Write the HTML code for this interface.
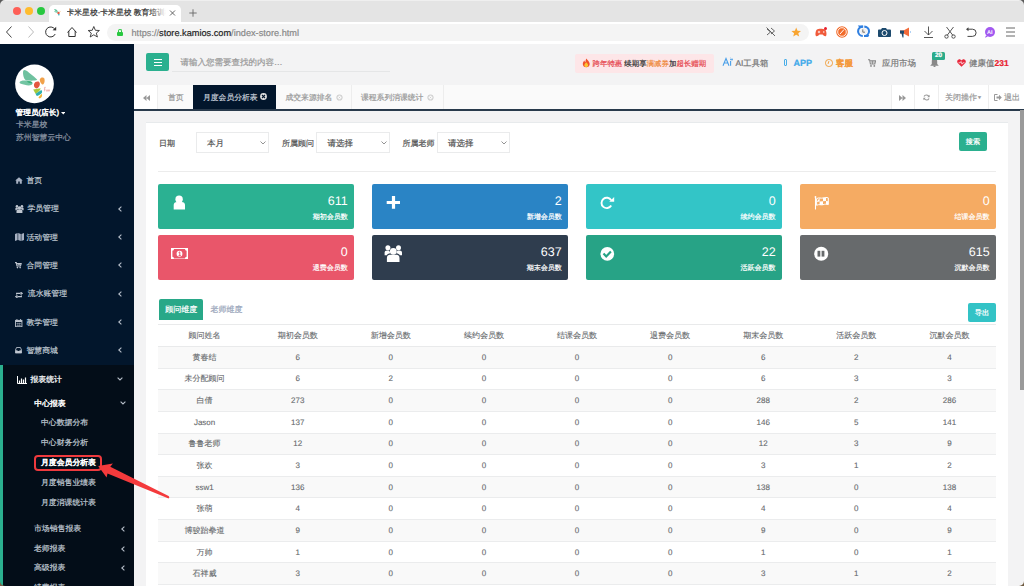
<!DOCTYPE html>
<html><head><meta charset="utf-8">
<style>
*{box-sizing:border-box;margin:0;padding:0}
body *{-webkit-text-stroke:0.2px currentColor}html,body{width:1024px;height:586px;overflow:hidden;background:#f3f3f4;font-family:"Liberation Sans",sans-serif;text-rendering:geometricPrecision}
.a{position:absolute;white-space:nowrap}
/* browser chrome */
#tabbar{position:absolute;left:0;top:0;width:1024px;height:22px;background:#e4e4e4;border-top:1px solid #efefef}
#toolbar{position:absolute;left:0;top:22px;width:1024px;height:22px;background:#fff}
.dot{position:absolute;width:8px;height:8px;border-radius:50%;top:7px}
#ctab{position:absolute;left:49px;top:5px;width:132px;height:17px;background:#fff;border-radius:5px 5px 0 0}
#addr{position:absolute;left:107px;top:24px;width:702px;height:17px;background:#f4f4f4;border-radius:9px}
/* app */
#side{position:absolute;left:0;top:44px;width:134px;height:542px;background:#02162c}
#sub{position:absolute;left:0;top:365px;width:134px;height:221px;background:#030d18;border-left:3px solid #2bb08f}
.mi{position:absolute;color:#bfc6d0;font-size:7.85px;line-height:10px;white-space:nowrap}
#header{position:absolute;left:134px;top:44px;width:890px;height:41px;background:#f3f3f4}
#tabs{position:absolute;left:134px;top:84.8px;width:890px;height:26.2px;background:#fafafa;border-bottom:2px solid #293a4c}
#content{position:absolute;left:134px;top:111px;width:890px;height:475px;background:#f3f3f4}
#panel{position:absolute;left:146px;top:122px;width:862px;height:470px;background:#fff}
.card{position:absolute;width:195.5px;height:45px;border-radius:2px;color:#fff}.card .n{-webkit-text-stroke:0}
.card .n{position:absolute;right:6px;top:9.5px;font-size:12.5px;line-height:14px}
.card .l{position:absolute;right:6px;top:29px;font-size:7px;line-height:9px}
.card svg{position:absolute}
table{position:absolute;left:158px;top:324px;width:838px;border-collapse:collapse;font-size:8px;color:#66696c}table *{-webkit-text-stroke:0.1px currentColor}
td,th{height:21.65px;text-align:center;font-weight:normal;padding:1px 0 0 0;line-height:10px}
th{height:22px}
thead tr{border-top:1px solid #e9eaeb;border-bottom:1px solid #e9eaeb}
tbody tr{border-bottom:1px solid #ebeced}
tbody tr:nth-child(odd){background:#f9f9f9}
</style></head><body>
<!-- browser chrome -->
<div id="tabbar"></div>
<div class="dot" style="left:12.5px;background:#fe5f57"></div>
<div class="dot" style="left:24.5px;background:#febc2e"></div>
<div class="dot" style="left:36.8px;background:#28c840"></div>
<div id="ctab"></div>
<div class="a" style="left:66.5px;top:8px;font-size:7.8px;line-height:10px;color:#333;width:99px;overflow:hidden">卡米星校-卡米星校 教育培训机构</div><div class="a" style="left:150px;top:7px;width:16px;height:12px;background:linear-gradient(to right,rgba(255,255,255,0),#fff)"></div>
<svg class="a" style="left:169px;top:10px" width="7" height="6" viewBox="0 0 7 6"><path d="M1 0.5 L6 5.5 M6 0.5 L1 5.5" stroke="#555" stroke-width="0.9"/></svg>
<svg class="a" style="left:189px;top:8.5px" width="8" height="8" viewBox="0 0 8 8"><path d="M4 0.3 V7.7 M0.3 4 H7.7" stroke="#666" stroke-width="0.9"/></svg>
<div id="toolbar"></div>
<div id="addr"></div>
<div class="a" style="left:131.5px;top:28.3px;font-size:9.2px;line-height:10px;color:#888">https://<span style="color:#222">store.kamios.com</span>/index-store.html</div>
<div id="lock" style="position:absolute;left:117px;top:31.5px;width:6px;height:4.5px;background:#28c840;border-radius:1px"></div>
<div style="position:absolute;left:118px;top:28.5px;width:4px;height:4px;border:1.2px solid #28c840;border-bottom:none;border-radius:2px 2px 0 0"></div>

<!-- toolbar icons -->
<svg class="a" style="left:0;top:21.2px" width="110" height="22" viewBox="0 0 110 22">
<path d="M11.5 5.5 L6.5 11 L11.5 16.5" stroke="#444" stroke-width="1" fill="none"/>
<path d="M28.5 5.5 L33.5 11 L28.5 16.5" stroke="#bbb" stroke-width="1" fill="none"/>
<path d="M54.8 8.2 A5 5 0 1 0 55.2 13" stroke="#333" stroke-width="1" fill="none"/>
<path d="M56.2 5.8 L56.2 9.6 L52.6 9.2Z" fill="#333"/>
<path d="M67.5 11.5 L72 6.5 L76.5 11.5 M68.8 10 V15.5 H75.2 V10" stroke="#333" stroke-width="1" fill="none" stroke-linejoin="round"/>
<path d="M93.8 5.5 L95.4 9.3 L99.4 9.5 L96.3 12.1 L97.4 16 L93.8 13.8 L90.2 16 L91.3 12.1 L88.2 9.5 L92.2 9.3Z" stroke="#333" stroke-width="0.9" fill="none" stroke-linejoin="round"/>
</svg>
<svg class="a" style="left:760px;top:21.3px" width="264" height="22" viewBox="0 0 264 22">
<path d="M7 8 L10.5 11 L7 14 M11 7 L14.5 10 L11 13" stroke="#555" stroke-width="0.9" fill="none"/><path d="M6.5 6.5 L15 15" stroke="#555" stroke-width="0.9"/>
<path d="M36.2 6.5 L37.5 9.8 L41 10 L38.3 12.2 L39.2 15.6 L36.2 13.7 L33.2 15.6 L34.1 12.2 L31.4 10 L34.9 9.8Z" fill="#f8a532"/>
<path d="M57 8.5 C58 7.5 63 7.5 65 8.5 C66.5 9.5 67 14 66 15 C65 15.8 63.5 14.5 62.5 13.5 H59.5 C58.5 14.5 57 15.8 56 15 C55 14 55.5 9.5 57 8.5Z" fill="#f05a3a"/><path d="M57.8 11 H60.2 M59 9.8 V12.2" stroke="#fff" stroke-width="0.8"/><circle cx="63.8" cy="11" r="0.7" fill="#fff"/><circle cx="65.5" cy="7.5" r="1.5" fill="#e8202e"/>
<circle cx="82" cy="11" r="5.8" fill="#f26b2a"/><circle cx="82" cy="11" r="4.3" fill="none" stroke="#fff" stroke-width="0.9"/><path d="M80 13 L84 8.5" stroke="#fff" stroke-width="1"/>
<path d="M102.8 5.6 A4.7 4.7 0 0 0 102.8 15" stroke="#2f7fe0" stroke-width="2.1" fill="none"/><path d="M97.8 4.5 H103.2 V6.7 H99.6Z" fill="#2f7fe0"/><path d="M104.3 5.6 A4.7 4.7 0 0 1 104.3 15" stroke="#2f7fe0" stroke-width="2.1" fill="none"/><path d="M104 13.9 H109.3 L108.2 15.9 H104Z" fill="#2f7fe0"/><circle cx="103.6" cy="10.3" r="3.3" fill="#f0f0f0"/><path d="M102.8 8.4 V11.2 H105" stroke="#555" stroke-width="0.8" fill="none"/>
<path d="M118.5 8.5 H121 L122 7 H126 L127 8.5 H130 C130.5 8.5 131 9 131 9.5 V15 C131 15.5 130.5 16 130 16 H119 C118.5 16 118 15.5 118 15 V9.5 C118 9 118.5 8.5 119 8.5Z" fill="#1d4a6e"/><circle cx="124.5" cy="12" r="2.5" fill="none" stroke="#fff" stroke-width="1"/>
<path d="M140 9.5 H143.5 L149 6.5 V15.5 L143.5 12.5 H140Z" fill="#f26b3a"/><path d="M140 9.5 H144 V12.5 H140Z M141.5 12.5 L142.5 16.5 H143.5 L143.5 12.5Z" fill="#1d4a6e"/><path d="M150.5 10.5 V11.5" stroke="#3a8ee6" stroke-width="0.8"/>
<path d="M168.5 5.5 V14 M164.5 10 L168.5 14 L172.5 10" stroke="#444" stroke-width="0.9" fill="none"/><path d="M164 16.5 H173" stroke="#444" stroke-width="0.9"/>
<path d="M186.5 6 L193 14.5 M193.5 6 L187 14.5" stroke="#444" stroke-width="0.9"/><circle cx="186.5" cy="15.5" r="1.7" fill="none" stroke="#444" stroke-width="0.9"/><circle cx="193.5" cy="15.5" r="1.7" fill="none" stroke="#444" stroke-width="0.9"/>
<path d="M207 8.2 H212.5 A3.6 3.6 0 0 1 212.5 15.4 H207.5" stroke="#444" stroke-width="1" fill="none"/><path d="M206 8.2 L208.5 6.2 V10.2Z" fill="#444"/>
<circle cx="230" cy="11" r="5" fill="#a259f0"/><path d="M226 14.5 L225 16.8 L228 15.6Z" fill="#a259f0"/><text x="227" y="13.3" font-size="5.5" font-weight="bold" fill="#fff" font-family="Liberation Sans">AI</text>
<path d="M246 7 H255 M246 11 H255 M246 15 H255" stroke="#555" stroke-width="0.9"/>
</svg>
<!-- favicon -->
<svg class="a" style="left:54px;top:8px" width="8" height="9" viewBox="0 0 8 9"><path d="M0 1 C2 1 3.5 2 4 4 C2.5 4 1 3 0 1Z" fill="#5cbf98"/><path d="M0 3.5 C1.5 3 3 3.5 4 4.5 C2.5 5 1 4.5 0 3.5Z" fill="#6cc6a2"/><circle cx="4.5" cy="5" r="1.2" fill="#e9573f"/><path d="M5.8 2.5 L6.5 3.5 L5.8 4.5Z" fill="#f2a650"/><path d="M3.8 6.2 L5.8 5.8 L5 8 Z" fill="#3bb3c3"/></svg>

<!-- sidebar -->
<div id="side"></div>
<div id="sub"></div>
<svg style="position:absolute;left:14px;top:63px" width="42" height="42" viewBox="0 0 586 586">
<circle cx="286" cy="290" r="270" fill="#fff"/>
<path d="M128 110 C140 85 175 105 210 135 C260 175 300 205 325 235 C290 250 220 250 165 240 C135 220 120 150 128 110Z" fill="#6fc19f"/>
<path d="M78 270 C85 240 150 240 215 250 C245 255 262 265 258 290 C250 315 200 318 150 305 C110 295 75 290 78 270Z" fill="#73c5a3"/>
<path d="M185 252 C215 255 245 262 258 278 C245 285 215 280 190 268Z" fill="#3aae78"/>
<path d="M278 305 C280 270 318 252 348 262 C370 280 365 325 332 350 C302 365 275 340 278 305Z" fill="#e4573f"/>
<path d="M362 225 C370 200 410 195 425 220 C432 250 425 290 405 300 C385 300 355 260 362 225Z" fill="#f1a14a"/>
<path d="M268 368 L372 352 C365 385 335 410 300 428 Z" fill="#a9c93c"/>
<path d="M300 430 C330 410 360 390 382 375 C398 392 395 415 378 428 C358 442 335 455 318 462 Z" fill="#2eb0ae"/>
<path d="M340 480 C355 462 372 442 388 428 C398 452 390 482 358 496 Z" fill="#f1b234"/>
<path d="M425 340 V395 M425 340 H445 M425 365 H440 M450 370 V392 M450 392 H470 V370 M480 370 V392 H495 V370" stroke="#e07070" stroke-width="6" fill="none"/>
</svg>
<div class="mi" style="left:15.5px;top:108.3px;color:#fff;-webkit-text-stroke:0.45px #fff;font-size:7.7px">管理员(店长)</div><svg class="a" style="left:60.5px;top:111.8px" width="4.5" height="3" viewBox="0 0 4.5 3"><path d="M0 0 H4.5 L2.25 2.5Z" fill="#fff"/></svg>
<div class="mi" style="left:16px;top:119.5px;color:#8b95a3">卡米星校</div>
<div class="mi" style="left:16px;top:133px;color:#8b95a3">苏州智慧云中心</div>

<div class="mi" style="left:26.5px;top:176.1px">首页</div>
<div class="mi" style="left:27.4px;top:204.4px">学员管理</div>
<div class="mi" style="left:26.5px;top:232.7px">活动管理</div>
<div class="mi" style="left:26.5px;top:261.0px">合同管理</div>
<div class="mi" style="left:27.8px;top:289.3px">流水账管理</div>
<div class="mi" style="left:26.5px;top:317.6px">教学管理</div>
<div class="mi" style="left:26.5px;top:345.9px">智慧商城</div>
<div class="mi" style="left:30.5px;top:375px;color:#eef0f3;-webkit-text-stroke:0.3px #eef0f3">报表统计</div>
<div class="mi" style="left:34.3px;top:399px;color:#fff;-webkit-text-stroke:0.4px #fff">中心报表</div>
<div class="mi" style="left:41px;top:418.1px">中心数据分布</div>
<div class="mi" style="left:41px;top:438.2px">中心财务分析</div>
<div class="mi" style="left:41px;top:458.3px;color:#fff;-webkit-text-stroke:0.5px #fff">月度会员分析表</div>
<div class="mi" style="left:41px;top:477.8px">月度销售业绩表</div>
<div class="mi" style="left:41px;top:497.6px">月度消课统计表</div>
<div class="mi" style="left:34px;top:523.7px">市场销售报表</div>
<div class="mi" style="left:34px;top:543.7px">老师报表</div>
<div class="mi" style="left:34px;top:563.1px">高级报表</div>
<div class="mi" style="left:34px;top:583px">续费报表</div>

<!-- sidebar icons -->
<svg class="a" style="left:15px;top:176.5px" width="8" height="7" viewBox="0 0 8 7"><path d="M4 0.3 L7.8 3.6 L6.8 3.6 L6.8 6.8 L4.8 6.8 L4.8 4.6 L3.2 4.6 L3.2 6.8 L1.2 6.8 L1.2 3.6 L0.2 3.6Z" fill="#a7b1c2"/></svg>
<svg class="a" style="left:15px;top:204.8px" width="9" height="8" viewBox="12.4 10 17.8 17"><circle cx="21.3" cy="16.3" r="3.6" fill="#bfc6d0"/><circle cx="15.9" cy="12.9" r="2.7" fill="#bfc6d0"/><circle cx="26.5" cy="12.9" r="2.7" fill="#bfc6d0"/><path d="M14.9 27 V23 C14.9 21 16.2 19.8 18.2 19.8 H24.2 C26.2 19.8 27.5 21 27.5 23 V27Z" fill="#bfc6d0"/><path d="M12.6 21 V17.6 C12.6 16.3 13.6 15.5 15 15.5 H17.2 C17.5 16.5 17.9 17.3 18.5 18.3 C16.4 18.6 15.2 19.3 14.8 21Z M30 21 V17.6 C30 16.3 29 15.5 27.6 15.5 H25.4 C25.1 16.5 24.7 17.3 24.1 18.3 C26.2 18.6 27.4 19.3 27.8 21Z" fill="#bfc6d0"/></svg>
<svg class="a" style="left:15px;top:232.5px" width="9" height="8" viewBox="0 0 9 8"><path d="M0 1 L2.6 0 L2.6 7 L0 8Z M3.2 0 L5.8 1 L5.8 8 L3.2 7Z M6.4 1 L9 0 L9 7 L6.4 8Z" fill="#a7b1c2"/></svg>
<svg class="a" style="left:15.2px;top:262px" width="6.5" height="6.5" viewBox="0 0 8 8"><path d="M0 0.8 L1.6 0.8 L2.4 5 L6.8 5 L7.6 1.8 L2 1.8" stroke="#bfc6d0" stroke-width="1.3" fill="none"/><circle cx="3" cy="6.9" r="1" fill="#bfc6d0"/><circle cx="6.3" cy="6.9" r="1" fill="#bfc6d0"/><path d="M3 3.3 L6.8 3.3" stroke="#bfc6d0" stroke-width="1.2"/></svg>
<svg class="a" style="left:15.3px;top:291.5px" width="8" height="6" viewBox="0 0 10 7"><path d="M2 3 L2 1.5 L7 1.5 M7 0 L9 1.5 L7 3 M8 4 L8 5.5 L3 5.5 M3 4 L1 5.5 L3 7" stroke="#bfc6d0" stroke-width="1.4" fill="none"/></svg>
<svg class="a" style="left:15.3px;top:318.5px" width="7.5" height="8.2" viewBox="0 0 8 9"><rect x="0.5" y="1.5" width="7" height="7" fill="none" stroke="#bfc6d0" stroke-width="1"/><rect x="0.5" y="1.5" width="7" height="1.8" fill="#bfc6d0"/><path d="M2 0 L2 2 M6 0 L6 2" stroke="#bfc6d0" stroke-width="1"/><path d="M1.5 5 H6.5 M1.5 7 H6.5 M3 4 V8 M5 4 V8" stroke="#bfc6d0" stroke-width="0.5"/></svg>
<svg class="a" style="left:15.3px;top:347.2px" width="7" height="6.5" viewBox="0 0 9 8"><path d="M0.5 4 L2 0.5 L7 0.5 L8.5 4 L8.5 7.5 L0.5 7.5Z" fill="none" stroke="#bfc6d0" stroke-width="1.1"/><path d="M0.5 4 L3 4 L3.5 5 L5.5 5 L6 4 L8.5 4 L8.5 7.5 L0.5 7.5Z" fill="#bfc6d0"/></svg>
<svg class="a" style="left:17px;top:375.5px" width="10" height="8" viewBox="0 0 10 8"><path d="M0.5 0 V7.5 H10" stroke="#fff" stroke-width="1" fill="none"/><path d="M2.5 4.5 V7 M4.5 2.5 V7 M6.5 3.5 V7 M8.5 1.5 V7" stroke="#fff" stroke-width="1.2"/></svg>
<!-- chevrons -->
<svg class="a" style="left:118.3px;top:205.8px" width="4" height="6" viewBox="0 0 4 6"><path d="M3.4 0.6 L0.8 3 L3.4 5.4" stroke="#b5bdc8" stroke-width="1.1" fill="none"/></svg>
<svg class="a" style="left:118.3px;top:234.1px" width="4" height="6" viewBox="0 0 4 6"><path d="M3.4 0.6 L0.8 3 L3.4 5.4" stroke="#b5bdc8" stroke-width="1.1" fill="none"/></svg>
<svg class="a" style="left:118.3px;top:262.4px" width="4" height="6" viewBox="0 0 4 6"><path d="M3.4 0.6 L0.8 3 L3.4 5.4" stroke="#b5bdc8" stroke-width="1.1" fill="none"/></svg>
<svg class="a" style="left:118.3px;top:290.7px" width="4" height="6" viewBox="0 0 4 6"><path d="M3.4 0.6 L0.8 3 L3.4 5.4" stroke="#b5bdc8" stroke-width="1.1" fill="none"/></svg>
<svg class="a" style="left:118.3px;top:319.0px" width="4" height="6" viewBox="0 0 4 6"><path d="M3.4 0.6 L0.8 3 L3.4 5.4" stroke="#b5bdc8" stroke-width="1.1" fill="none"/></svg>
<svg class="a" style="left:118.3px;top:347.3px" width="4" height="6" viewBox="0 0 4 6"><path d="M3.4 0.6 L0.8 3 L3.4 5.4" stroke="#b5bdc8" stroke-width="1.1" fill="none"/></svg>
<svg class="a" style="left:116.8px;top:376.8px" width="6" height="4" viewBox="0 0 6 4"><path d="M0.6 0.6 L3 3 L5.4 0.6" stroke="#b5bdc8" stroke-width="1.1" fill="none"/></svg>
<svg class="a" style="left:119.6px;top:400.6px" width="6" height="4" viewBox="0 0 6 4"><path d="M0.6 0.6 L3 3 L5.4 0.6" stroke="#b5bdc8" stroke-width="1.1" fill="none"/></svg>
<svg class="a" style="left:121.3px;top:525.8px" width="4" height="6" viewBox="0 0 4 6"><path d="M3.4 0.6 L0.8 3 L3.4 5.4" stroke="#b5bdc8" stroke-width="1.1" fill="none"/></svg>
<svg class="a" style="left:121.3px;top:545.8px" width="4" height="6" viewBox="0 0 4 6"><path d="M3.4 0.6 L0.8 3 L3.4 5.4" stroke="#b5bdc8" stroke-width="1.1" fill="none"/></svg>
<svg class="a" style="left:121.3px;top:565.3px" width="4" height="6" viewBox="0 0 4 6"><path d="M3.4 0.6 L0.8 3 L3.4 5.4" stroke="#b5bdc8" stroke-width="1.1" fill="none"/></svg>
<!-- red highlight -->
<div class="a" style="left:34.2px;top:454.8px;width:68.2px;height:16.4px;border:2px solid #ef3a3e;border-radius:4px"></div>

<!-- header -->
<div id="header"></div>
<div style="position:absolute;left:146px;top:53px;width:23px;height:18px;background:#2bb08f;border-radius:2px"></div>
<div style="position:absolute;left:154px;top:58.5px;width:8px;height:1.5px;background:#fff;box-shadow:0 3px 0 #fff,0 6px 0 #fff"></div>
<div class="a" style="left:180.5px;top:57.3px;font-size:8.5px;line-height:10px;color:#999">请输入您需要查找的内容…</div>
<div style="position:absolute;left:172px;top:70.5px;width:218px;height:1px;background:#e5e6e7"></div>

<!-- header right -->
<div class="a" style="left:575px;top:54px;width:139px;height:18.6px;background:#fde6e8;border-radius:2px"></div>
<svg class="a" style="left:581.5px;top:58.3px" width="8.5" height="9.5" viewBox="0 0 9 11"><path d="M4.5 0.5 C6 2.5 8.5 4 8.5 7 C8.5 9.3 6.8 10.8 4.5 10.8 C2.2 10.8 0.5 9.3 0.5 7 C0.5 5 1.8 3.8 2.5 3 C2.6 4.2 3 4.8 3.6 5 C3.6 3.2 4 2 4.5 0.5Z" fill="#f0522a"/><path d="M4.5 5 C5.5 6.3 6.7 7 6.7 8.5 C6.7 9.7 5.7 10.6 4.5 10.6 C3.3 10.6 2.3 9.7 2.3 8.5 C2.3 7.3 3.6 6.3 4.5 5Z" fill="#fbc531"/></svg>
<div class="a" style="left:592.5px;top:59px;font-size:7.45px;line-height:10px;color:#e64a52">跨年特惠 <span style="color:#333">续期享</span><span style="color:#ef8a3c">满减券</span><span style="color:#333">加</span>超长赠期</div>
<svg class="a" style="left:722px;top:57px" width="12" height="10" viewBox="0 0 12 10"><path d="M1 8.8 L4 1.5 L7 8.8 M2.2 6 H5.8 M8.6 4 V8.8" stroke="#4a9fe8" stroke-width="1.1" fill="none"/><circle cx="8.6" cy="2.6" r="0.6" fill="#4a9fe8"/><circle cx="10" cy="2.5" r="0.9" fill="#4a9fe8"/><circle cx="8.3" cy="1" r="0.45" fill="#4a9fe8"/></svg>
<div class="a" style="left:735.5px;top:58.3px;font-size:8.3px;line-height:10px;color:#727272">AI工具箱</div>
<div class="a" style="left:783.5px;top:59px;width:3.5px;height:6.5px;border:1px solid #4aaee8;border-radius:1px"></div>
<div class="a" style="left:793.5px;top:57.5px;font-size:9px;line-height:11px;color:#41a9ea;font-weight:bold">APP</div>
<div class="a" style="left:825px;top:59px;width:7.5px;height:7.5px;border:1.1px solid #f0a040;border-radius:50%"></div>
<div class="a" style="left:828.3px;top:60.5px;width:1px;height:2.8px;background:#f0a040;transform:rotate(20deg)"></div>
<div class="a" style="left:836px;top:58px;font-size:8.5px;line-height:10px;color:#f39a3d;font-weight:bold">客服</div>
<svg class="a" style="left:867.5px;top:59px" width="8" height="8" viewBox="0 0 8 8"><path d="M0 0.8 L1.6 0.8 L2.4 5 L6.8 5 L7.6 1.8 L2 1.8" stroke="#888" stroke-width="1.1" fill="none"/><circle cx="3" cy="6.9" r="0.9" fill="#888"/><circle cx="6.3" cy="6.9" r="0.9" fill="#888"/><path d="M3 3 L6.8 3 M4.5 1.8 V5" stroke="#888" stroke-width="0.8"/></svg>
<div class="a" style="left:882px;top:58px;font-size:8.5px;line-height:10px;color:#777">应用市场</div>
<svg class="a" style="left:930px;top:57px" width="9" height="10" viewBox="0 0 9 10"><path d="M4.5 0.5 C6.5 0.5 7.2 2.5 7.2 4.5 L7.2 7 L8.8 8.8 L0.2 8.8 L1.8 7 L1.8 4.5 C1.8 2.5 2.5 0.5 4.5 0.5Z" fill="#888"/><circle cx="4.5" cy="9.3" r="1" fill="#888"/></svg>
<div class="a" style="left:932px;top:52px;width:13px;height:8px;background:#2bab8a;border-radius:1.5px;color:#fff;font-size:6.5px;line-height:8px;text-align:center;font-weight:bold">20</div>
<svg class="a" style="left:957px;top:58.5px" width="9" height="8" viewBox="0 0 9 8"><path d="M4.5 7.8 L0.9 4.2 C-0.3 3 0 0.8 1.8 0.4 C3 0.1 3.9 0.8 4.5 1.6 C5.1 0.8 6 0.1 7.2 0.4 C9 0.8 9.3 3 8.1 4.2Z" fill="#e8283c"/><path d="M1.5 3.8 L3.2 3.8 L4 2.5 L5 5.2 L5.8 3.8 L7.5 3.8" stroke="#fff" stroke-width="0.7" fill="none"/></svg>
<div class="a" style="left:969px;top:58px;font-size:8.5px;line-height:10px;color:#777">健康值<span style="color:#e8202e;font-weight:bold">231</span></div>

<!-- tabs -->
<div id="tabs"></div>
<div class="a" style="left:134px;top:84.8px;width:24px;height:24.2px;background:#fff;border-right:1px solid #eee"></div>
<svg class="a" style="left:143px;top:94.5px" width="7" height="6" viewBox="0 0 7 6"><path d="M3.5 0 L0 3 L3.5 6Z M7 0 L3.5 3 L7 6Z" fill="#999"/></svg>
<div class="a" style="left:168px;top:92.6px;font-size:7.8px;line-height:10px;color:#999">首页</div>
<div class="a" style="left:193px;top:84.8px;width:83px;height:24.2px;background:#02162c"></div>
<div class="a" style="left:203px;top:92.6px;font-size:7.8px;line-height:10px;color:#c3cbd6">月度会员分析表</div>
<svg class="a" style="left:260px;top:93.4px" width="7" height="7" viewBox="0 0 7 7"><circle cx="3.5" cy="3.5" r="3.4" fill="#e2e2e2"/><path d="M2 2 L5 5 M5 2 L2 5" stroke="#02162c" stroke-width="1.1"/></svg>
<div class="a" style="left:276px;top:84.8px;width:76px;height:24.2px;border-right:1px solid #ededed"></div>
<div class="a" style="left:285.5px;top:92.6px;font-size:7.8px;line-height:10px;color:#999">成交来源排名</div>
<svg class="a" style="left:335.8px;top:93.8px" width="7" height="7" viewBox="0 0 7 7"><circle cx="3.5" cy="3.5" r="3.1" fill="#cfcfcf"/><circle cx="3.5" cy="3.5" r="2" fill="#fafafa"/><path d="M2.6 2.6 L4.4 4.4 M4.4 2.6 L2.6 4.4" stroke="#cfcfcf" stroke-width="0.8"/></svg>
<div class="a" style="left:352px;top:84.8px;width:92px;height:24.2px;border-right:1px solid #ededed"></div>
<div class="a" style="left:361px;top:92.6px;font-size:7.8px;line-height:10px;color:#999">课程系列消课统计</div>
<svg class="a" style="left:426.8px;top:93.8px" width="7" height="7" viewBox="0 0 7 7"><circle cx="3.5" cy="3.5" r="3.1" fill="#cfcfcf"/><circle cx="3.5" cy="3.5" r="2" fill="#fafafa"/><path d="M2.6 2.6 L4.4 4.4 M4.4 2.6 L2.6 4.4" stroke="#cfcfcf" stroke-width="0.8"/></svg>
<div class="a" style="left:890.5px;top:84.8px;width:134px;height:24.2px;background:#fff"></div>
<div class="a" style="left:890.5px;top:84.8px;width:1px;height:24.2px;background:#eee"></div>
<div class="a" style="left:914px;top:84.8px;width:1px;height:24.2px;background:#eee"></div>
<div class="a" style="left:938px;top:84.8px;width:1px;height:24.2px;background:#eee"></div>
<div class="a" style="left:987.5px;top:84.8px;width:1px;height:24.2px;background:#eee"></div>
<svg class="a" style="left:899px;top:94.5px" width="7" height="6" viewBox="0 0 7 6"><path d="M0 0 L3.5 3 L0 6Z M3.5 0 L7 3 L3.5 6Z" fill="#999"/></svg>
<svg class="a" style="left:922.5px;top:93.5px" width="7" height="7" viewBox="0 0 7 7"><path d="M6 2.8 A2.7 2.7 0 0 0 1 2.5 M1 4.2 A2.7 2.7 0 0 0 6 4.5" stroke="#999" stroke-width="1.1" fill="none"/><path d="M6.6 0.8 L6.6 3.2 L4.3 3.2Z M0.4 6.2 L0.4 3.8 L2.7 3.8Z" fill="#999"/></svg>
<div class="a" style="left:945px;top:92.5px;font-size:8px;line-height:10px;color:#999">关闭操作<span style="font-size:5px;position:relative;top:-1px">▼</span></div>
<svg class="a" style="left:994px;top:94px" width="8" height="7" viewBox="0 0 8 7"><path d="M3.5 0.5 H0.5 V6.5 H3.5" stroke="#999" stroke-width="1" fill="none"/><path d="M2.5 2.5 H5 V0.8 L7.8 3.5 L5 6.2 V4.5 H2.5Z" fill="#999"/></svg>
<div class="a" style="left:1004px;top:92.5px;font-size:8px;line-height:10px;color:#999">退出</div>

<!-- content -->
<div id="content"></div>
<div id="panel"></div>
<div style="position:absolute;left:146px;top:122px;width:862px;height:1px;background:#e7eaec"></div>
<div class="a" style="left:159px;top:139px;font-size:8px;line-height:10px;color:#555">日期</div>
<div class="a" style="left:196px;top:132px;width:73px;height:21px;border:1px solid #eaebec;font-size:8.5px;line-height:20.5px;color:#555;padding-left:10px">本月<svg width="6" height="4" viewBox="0 0 6 4" style="position:absolute;right:1.8px;top:8px"><path d="M0.5 0.5 L3 3 L5.5 0.5" stroke="#777" stroke-width="0.8" fill="none"/></svg></div>
<div class="a" style="left:282px;top:139px;font-size:8px;line-height:10px;color:#555">所属顾问</div>
<div class="a" style="left:316px;top:132px;width:73.5px;height:21px;border:1px solid #eaebec;font-size:8.5px;line-height:20.5px;color:#555;padding-left:10.5px">请选择<svg width="6" height="4" viewBox="0 0 6 4" style="position:absolute;right:1.8px;top:8px"><path d="M0.5 0.5 L3 3 L5.5 0.5" stroke="#777" stroke-width="0.8" fill="none"/></svg></div>
<div class="a" style="left:402.5px;top:139px;font-size:8px;line-height:10px;color:#555">所属老师</div>
<div class="a" style="left:436.5px;top:132px;width:73.5px;height:21px;border:1px solid #eaebec;font-size:8.5px;line-height:20.5px;color:#555;padding-left:10.5px">请选择<svg width="6" height="4" viewBox="0 0 6 4" style="position:absolute;right:1.8px;top:8px"><path d="M0.5 0.5 L3 3 L5.5 0.5" stroke="#777" stroke-width="0.8" fill="none"/></svg></div>
<div class="a" style="left:959px;top:132px;width:28px;height:19px;background:#2bb08f;border-radius:2px;color:#fff;font-size:7.2px;line-height:20.5px;text-align:center">搜索</div>
<div style="position:absolute;left:158px;top:171px;width:838px;height:1px;background:#ececec"></div>

<div class="card" style="left:158.3px;top:184px;background:#2bb192"><svg style="left:0;top:0" width="40" height="45" viewBox="0 0 40 45"><circle cx="21.1" cy="15.3" r="3.7" fill="#fff"/><path d="M15.7 25.5 V21 C15.7 19.2 17 18.1 19 18.1 H23.7 C25.7 18.1 27 19.2 27 21 V25.5Z" fill="#fff"/></svg><div class="n">611</div><div class="l">期初会员数</div></div>
<div class="card" style="left:372.2px;top:184px;background:#2a84c5"><svg style="left:0;top:0" width="40" height="45" viewBox="0 0 40 45"><path d="M19.9 11.9 H23.1 V16.9 H28 V20.1 H23.1 V24.7 H19.9 V20.1 H14.7 V16.9 H19.9Z" fill="#fff"/></svg><div class="n">2</div><div class="l">新增会员数</div></div>
<div class="card" style="left:586.1px;top:184px;background:#33c5c7"><svg style="left:0;top:0" width="40" height="45" viewBox="0 0 40 45"><path d="M25.2 16.3 A5.2 5.2 0 1 0 25.2 21.5" stroke="#fff" stroke-width="1.9" fill="none"/><path d="M23.2 17.7 H28.2 V12.9Z" fill="#fff"/></svg><div class="n">0</div><div class="l">续约会员数</div></div>
<div class="card" style="left:800.1px;top:184px;background:#f5ab63"><svg style="left:0;top:0" width="40" height="45" viewBox="0 0 40 45"><path d="M15.5 13 V25.5" stroke="#fff" stroke-width="1.1"/><circle cx="15.5" cy="12.9" r="0.9" fill="#fff"/><path d="M16.6 14.6 C19 13.2 21 14.6 23 14 C25 13.4 26.6 13.2 28.3 13.9 V20.6 C26.6 19.9 25 20.1 23 20.7 C21 21.3 19 19.9 16.6 21.3Z" fill="none" stroke="#fff" stroke-width="1"/><path d="M19.6 13.9 L19.6 17.4 L16.6 18 Z M19.6 17.4 L23 17.2 L23 20.7 L19.6 20.9Z M23 14 L26 13.4 L26 17 L23 17.2Z M26 17 L28.3 17.2 L28.3 20.6 L26 20.2Z" fill="#fff"/></svg><div class="n">0</div><div class="l">结课会员数</div></div>

<div class="card" style="left:158.3px;top:235px;background:#e9566a"><svg style="left:12.7px;top:12.9px" width="17" height="11.5" viewBox="0 0 17 11.5"><rect x="0" y="0" width="17" height="11.5" fill="#fff"/><path d="M3 1.1 H14 A1.6 1.6 0 0 0 15.6 2.7 V8.8 A1.6 1.6 0 0 0 14 10.4 H3 A1.6 1.6 0 0 0 1.4 8.8 V2.7 A1.6 1.6 0 0 0 3 1.1Z" fill="#e9566a"/><circle cx="8.5" cy="5.75" r="2.9" fill="#fff"/><path d="M7.6 4.6 L8.8 3.9 V7.6 M7.6 7.6 H9.8" stroke="#e9566a" stroke-width="1" fill="none"/></svg><div class="n">0</div><div class="l">退费会员数</div></div>
<div class="card" style="left:372.2px;top:235px;background:#2f3d4e"><svg style="left:0;top:0" width="40" height="45" viewBox="0 0 40 45"><circle cx="21.3" cy="16.3" r="3.4" fill="#fff"/><circle cx="15.9" cy="12.7" r="2.5" fill="#fff"/><circle cx="26.5" cy="12.7" r="2.5" fill="#fff"/><path d="M14.9 27 V23 C14.9 21 16.2 19.8 18.2 19.8 H24.2 C26.2 19.8 27.5 21 27.5 23 V27Z" fill="#fff"/><path d="M12.6 20.3 V17.6 C12.6 16.3 13.6 15.5 15 15.5 H17.2 C17.5 16.5 17.9 17.3 18.5 18.3 C16.4 18.6 15.2 19.3 14.8 20.3Z M30 20.3 V17.6 C30 16.3 29 15.5 27.6 15.5 H25.4 C25.1 16.5 24.7 17.3 24.1 18.3 C26.2 18.6 27.4 19.3 27.8 20.3Z" fill="#fff"/></svg><div class="n">637</div><div class="l">期末会员数</div></div>
<div class="card" style="left:586.1px;top:235px;background:#27a386"><svg style="left:0;top:0" width="40" height="45" viewBox="0 0 40 45"><circle cx="21.3" cy="18.8" r="6.85" fill="#fff"/><path d="M17.5 18.6 L20.2 21.4 L24.9 16.6" stroke="#27a386" stroke-width="2.2" fill="none"/></svg><div class="n">22</div><div class="l">活跃会员数</div></div>
<div class="card" style="left:800.1px;top:235px;background:#676a6c"><svg style="left:0;top:0" width="40" height="45" viewBox="0 0 40 45"><circle cx="21.2" cy="18.8" r="7" fill="#fff"/><rect x="17.5" y="15.8" width="2.8" height="5.8" fill="#676a6c"/><rect x="21.6" y="15.8" width="2.8" height="5.8" fill="#676a6c"/></svg><div class="n">615</div><div class="l">沉默会员数</div></div>

<div class="a" style="left:159px;top:299px;width:44px;height:21px;background:#28a888;border-radius:2px 2px 0 0;color:#fff;font-size:8px;line-height:21px;text-align:center;padding-left:0.5px">顾问维度</div>
<div class="a" style="left:210.5px;top:304.8px;font-size:8px;line-height:10px;color:#9aa6bb">老师维度</div>
<div class="a" style="left:968px;top:303px;width:28px;height:19px;background:#33c3c6;border-radius:2px;color:#fff;font-size:7.2px;line-height:20px;text-align:center">导出</div>
<table>
<thead><tr><th>顾问姓名</th><th>期初会员数</th><th>新增会员数</th><th>续约会员数</th><th>结课会员数</th><th>退费会员数</th><th>期末会员数</th><th>活跃会员数</th><th>沉默会员数</th></tr></thead>
<tbody>
<tr><td>黄春结</td><td>6</td><td>0</td><td>0</td><td>0</td><td>0</td><td>6</td><td>2</td><td>4</td></tr>
<tr><td>未分配顾问</td><td>6</td><td>2</td><td>0</td><td>0</td><td>0</td><td>6</td><td>3</td><td>3</td></tr>
<tr><td>白倩</td><td>273</td><td>0</td><td>0</td><td>0</td><td>0</td><td>288</td><td>2</td><td>286</td></tr>
<tr><td>Jason</td><td>137</td><td>0</td><td>0</td><td>0</td><td>0</td><td>146</td><td>5</td><td>141</td></tr>
<tr><td>鲁鲁老师</td><td>12</td><td>0</td><td>0</td><td>0</td><td>0</td><td>12</td><td>3</td><td>9</td></tr>
<tr><td>张欢</td><td>3</td><td>0</td><td>0</td><td>0</td><td>0</td><td>3</td><td>1</td><td>2</td></tr>
<tr><td>ssw1</td><td>136</td><td>0</td><td>0</td><td>0</td><td>0</td><td>138</td><td>0</td><td>138</td></tr>
<tr><td>张萌</td><td>4</td><td>0</td><td>0</td><td>0</td><td>0</td><td>4</td><td>0</td><td>4</td></tr>
<tr><td>博骏跆拳道</td><td>9</td><td>0</td><td>0</td><td>0</td><td>0</td><td>9</td><td>0</td><td>9</td></tr>
<tr><td>万帅</td><td>1</td><td>0</td><td>0</td><td>0</td><td>0</td><td>1</td><td>0</td><td>1</td></tr>
<tr><td>石祥威</td><td>3</td><td>0</td><td>0</td><td>0</td><td>0</td><td>3</td><td>1</td><td>2</td></tr>
<tr><td>王老师</td><td>0</td><td>0</td><td>0</td><td>0</td><td>0</td><td>0</td><td>0</td><td>0</td></tr>

</tbody></table>

<!-- scrollbar -->

<div class="a" style="left:1020px;top:110px;width:4px;height:280px;background:#9a9a9a"></div>
<svg class="a" style="left:0;top:0" width="1024" height="586"><path d="M98.2 465.9 L112.9 463.5 L110.3 466.8 L168.6 496.1 Q170.2 497.2 168.6 498.4 L107.5 473.6 L106.6 477.4Z" fill="#f43a3c"/></svg>
<svg class="a" style="left:0;top:0" width="6" height="6"><path d="M0 0 H5 A5 5 0 0 0 0 5Z" fill="#5a5a5a"/></svg>
<svg class="a" style="left:1018px;top:0" width="6" height="6"><path d="M6 0 H1 A5 5 0 0 1 6 5Z" fill="#5a5a5a"/></svg>
<svg class="a" style="left:0;top:580px" width="6" height="6"><path d="M0 6 H5 A5 5 0 0 1 0 1Z" fill="#7a6048"/></svg>
<svg class="a" style="left:1018px;top:580px" width="6" height="6"><path d="M6 6 H1 A5 5 0 0 0 6 1Z" fill="#6e5a40"/></svg>
</body></html>
